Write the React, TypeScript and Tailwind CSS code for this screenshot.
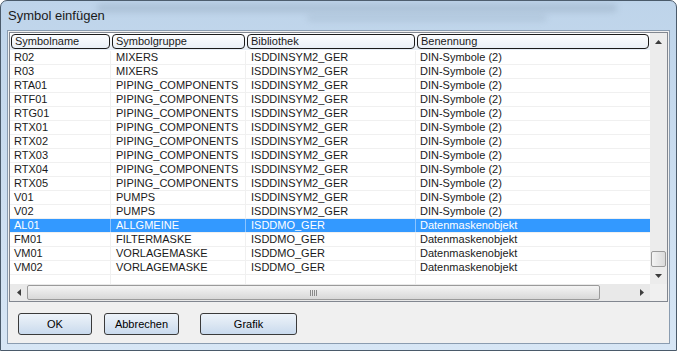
import React from "react";

type Row = { name: string; group: string; lib: string; desc: string };

const rows: Row[] = [
  { name: "R02", group: "MIXERS", lib: "ISDDINSYM2_GER", desc: "DIN-Symbole (2)" },
  { name: "R03", group: "MIXERS", lib: "ISDDINSYM2_GER", desc: "DIN-Symbole (2)" },
  { name: "RTA01", group: "PIPING_COMPONENTS", lib: "ISDDINSYM2_GER", desc: "DIN-Symbole (2)" },
  { name: "RTF01", group: "PIPING_COMPONENTS", lib: "ISDDINSYM2_GER", desc: "DIN-Symbole (2)" },
  { name: "RTG01", group: "PIPING_COMPONENTS", lib: "ISDDINSYM2_GER", desc: "DIN-Symbole (2)" },
  { name: "RTX01", group: "PIPING_COMPONENTS", lib: "ISDDINSYM2_GER", desc: "DIN-Symbole (2)" },
  { name: "RTX02", group: "PIPING_COMPONENTS", lib: "ISDDINSYM2_GER", desc: "DIN-Symbole (2)" },
  { name: "RTX03", group: "PIPING_COMPONENTS", lib: "ISDDINSYM2_GER", desc: "DIN-Symbole (2)" },
  { name: "RTX04", group: "PIPING_COMPONENTS", lib: "ISDDINSYM2_GER", desc: "DIN-Symbole (2)" },
  { name: "RTX05", group: "PIPING_COMPONENTS", lib: "ISDDINSYM2_GER", desc: "DIN-Symbole (2)" },
  { name: "V01", group: "PUMPS", lib: "ISDDINSYM2_GER", desc: "DIN-Symbole (2)" },
  { name: "V02", group: "PUMPS", lib: "ISDDINSYM2_GER", desc: "DIN-Symbole (2)" },
  { name: "AL01", group: "ALLGMEINE", lib: "ISDDMO_GER", desc: "Datenmaskenobjekt" },
  { name: "FM01", group: "FILTERMASKE", lib: "ISDDMO_GER", desc: "Datenmaskenobjekt" },
  { name: "VM01", group: "VORLAGEMASKE", lib: "ISDDMO_GER", desc: "Datenmaskenobjekt" },
  { name: "VM02", group: "VORLAGEMASKE", lib: "ISDDMO_GER", desc: "Datenmaskenobjekt" },
];

const cols = [
  { label: "Symbolname", w: "w-[101px]" },
  { label: "Symbolgruppe", w: "w-[135px]" },
  { label: "Bibliothek", w: "w-[170px]" },
  { label: "Benennung", w: "w-[234px]" },
];

function DialogButton({ label, w }: { label: string; w: string }) {
  return (
    <button
      type="button"
      className={`${w} h-[22px] rounded-[3px] border border-[#3a3a3a] bg-gradient-to-b from-[#edf3fa] via-[#dce7f3] to-[#c9daee] text-[11px] text-black`}
    >
      {label}
    </button>
  );
}

export default function App() {
  const selected = 12;

  return (
    <div className="relative h-[351px] w-[677px] overflow-hidden bg-white">
      <div
        className="flex h-[351px] w-[677px] flex-col rounded-t-[7px] border border-[#4a5a6a] bg-gradient-to-b from-[#bed4ea] to-[#d7e6f5] px-[6px] pb-[6px]"
        style={{ fontFamily: '"Liberation Sans", Arial, sans-serif' }}
      >
        {/* title bar */}
        <div className="relative flex h-[29px] items-center">
          <div className="absolute left-[90px] top-[3px] h-[8px] w-[520px] rounded-sm bg-[#8fa4b8] opacity-40 blur-[3px]" />
          <div className="absolute left-[300px] top-[14px] h-[6px] w-[240px] rounded-sm bg-[#8fa4b8] opacity-30 blur-[3px]" />
          <span className="relative pl-[1px] text-[13px] text-[#1a1a1a]">Symbol einfügen</span>
        </div>

        {/* client */}
        <div className="flex flex-1 flex-col border border-[#8a9cb0] bg-[#f0f0f0]">
          <div className="mx-[1px] mt-[1px] flex h-[270px] border border-[#828790] bg-white">
            <div className="flex w-[640px] flex-col">
              {/* header */}
              <div className="flex h-[17px] bg-gradient-to-b from-white to-[#e6edf6] pt-[1px]">
                {cols.map((c) => (
                  <div key={c.label} className={`${c.w} px-[1px]`}>
                    <div className="flex h-[15px] items-center rounded-[4px] border border-[#1a1a1a] pl-[3px] text-[11px] leading-none text-[#1a1a1a]">
                      {c.label}
                    </div>
                  </div>
                ))}
              </div>

              {/* rows */}
              <div className="flex-1 overflow-hidden pt-[1px]">
                {rows.map((r, i) => {
                  const sel = i === selected;
                  return (
                    <div
                      key={r.name}
                      className={`flex h-[14px] border-b border-[#f0f0f0] text-[11px] leading-[13px] ${
                        sel ? "bg-[#3399ff] text-white" : "text-[#1a1a1a]"
                      }`}
                    >
                      <div className={`w-[101px] border-r pl-[4px] ${sel ? "border-[#8cc4ff]" : "border-[#f0f0f0]"}`}>{r.name}</div>
                      <div className={`w-[135px] border-r pl-[5px] ${sel ? "border-[#8cc4ff]" : "border-[#f0f0f0]"}`}>{r.group}</div>
                      <div className={`w-[170px] border-r pl-[5px] ${sel ? "border-[#8cc4ff]" : "border-[#f0f0f0]"}`}>{r.lib}</div>
                      <div className="w-[234px] pl-[4px]">{r.desc}</div>
                    </div>
                  );
                })}
                <div className="flex h-[14px]">
                  <div className="w-[101px] border-r border-[#f0f0f0]" />
                  <div className="w-[135px] border-r border-[#f0f0f0]" />
                  <div className="w-[170px] border-r border-[#f0f0f0]" />
                </div>
              </div>

              {/* horizontal scrollbar */}
              <div className="flex h-[17px] items-center bg-[#e9e9e9]">
                <div className="flex w-[17px] justify-center">
                  <svg width="4" height="7" viewBox="0 0 4 7">
                    <path d="M4 0L0 3.5L4 7Z" fill="#3c3c3c" />
                  </svg>
                </div>
                <div className="flex h-[15px] w-[573px] items-center justify-center rounded-[2px] border border-[#9a9a9a] bg-gradient-to-b from-[#f4f4f4] to-[#d8d8d8]">
                  <svg width="8" height="6" viewBox="0 0 8 6">
                    <path d="M0.5 0V6M2.5 0V6M4.5 0V6M6.5 0V6" stroke="#8a8a8a" strokeWidth="1" />
                  </svg>
                </div>
                <div className="flex-1" />
                <div className="flex w-[17px] justify-center">
                  <svg width="4" height="7" viewBox="0 0 4 7">
                    <path d="M0 0L4 3.5L0 7Z" fill="#3c3c3c" />
                  </svg>
                </div>
              </div>
            </div>

            {/* vertical scrollbar */}
            <div className="flex w-[17px] flex-col">
              <div className="flex flex-1 flex-col items-center bg-[#ececec]">
                <div className="flex h-[17px] items-center">
                  <svg width="7" height="4" viewBox="0 0 7 4">
                    <path d="M0 4L3.5 0L7 4Z" fill="#3c3c3c" />
                  </svg>
                </div>
                <div className="flex-1" />
                <div className="h-[16px] w-[15px] rounded-[2px] border border-[#9a9a9a] bg-gradient-to-r from-[#f4f4f4] to-[#dadada]" />
                <div className="flex h-[17px] items-center">
                  <svg width="7" height="4" viewBox="0 0 7 4">
                    <path d="M0 0L3.5 4L7 0Z" fill="#3c3c3c" />
                  </svg>
                </div>
              </div>
              <div className="h-[17px] bg-[#f0f0f0]" />
            </div>
          </div>

          {/* buttons */}
          <div className="flex gap-[12px] pl-[10px] pt-[11px]">
            <DialogButton label="OK" w="w-[74px]" />
            <DialogButton label="Abbrechen" w="w-[75px]" />
            <div className="ml-[9px] flex">
              <DialogButton label="Grafik" w="w-[97px]" />
            </div>
          </div>
        </div>
      </div>
    </div>
  );
}
